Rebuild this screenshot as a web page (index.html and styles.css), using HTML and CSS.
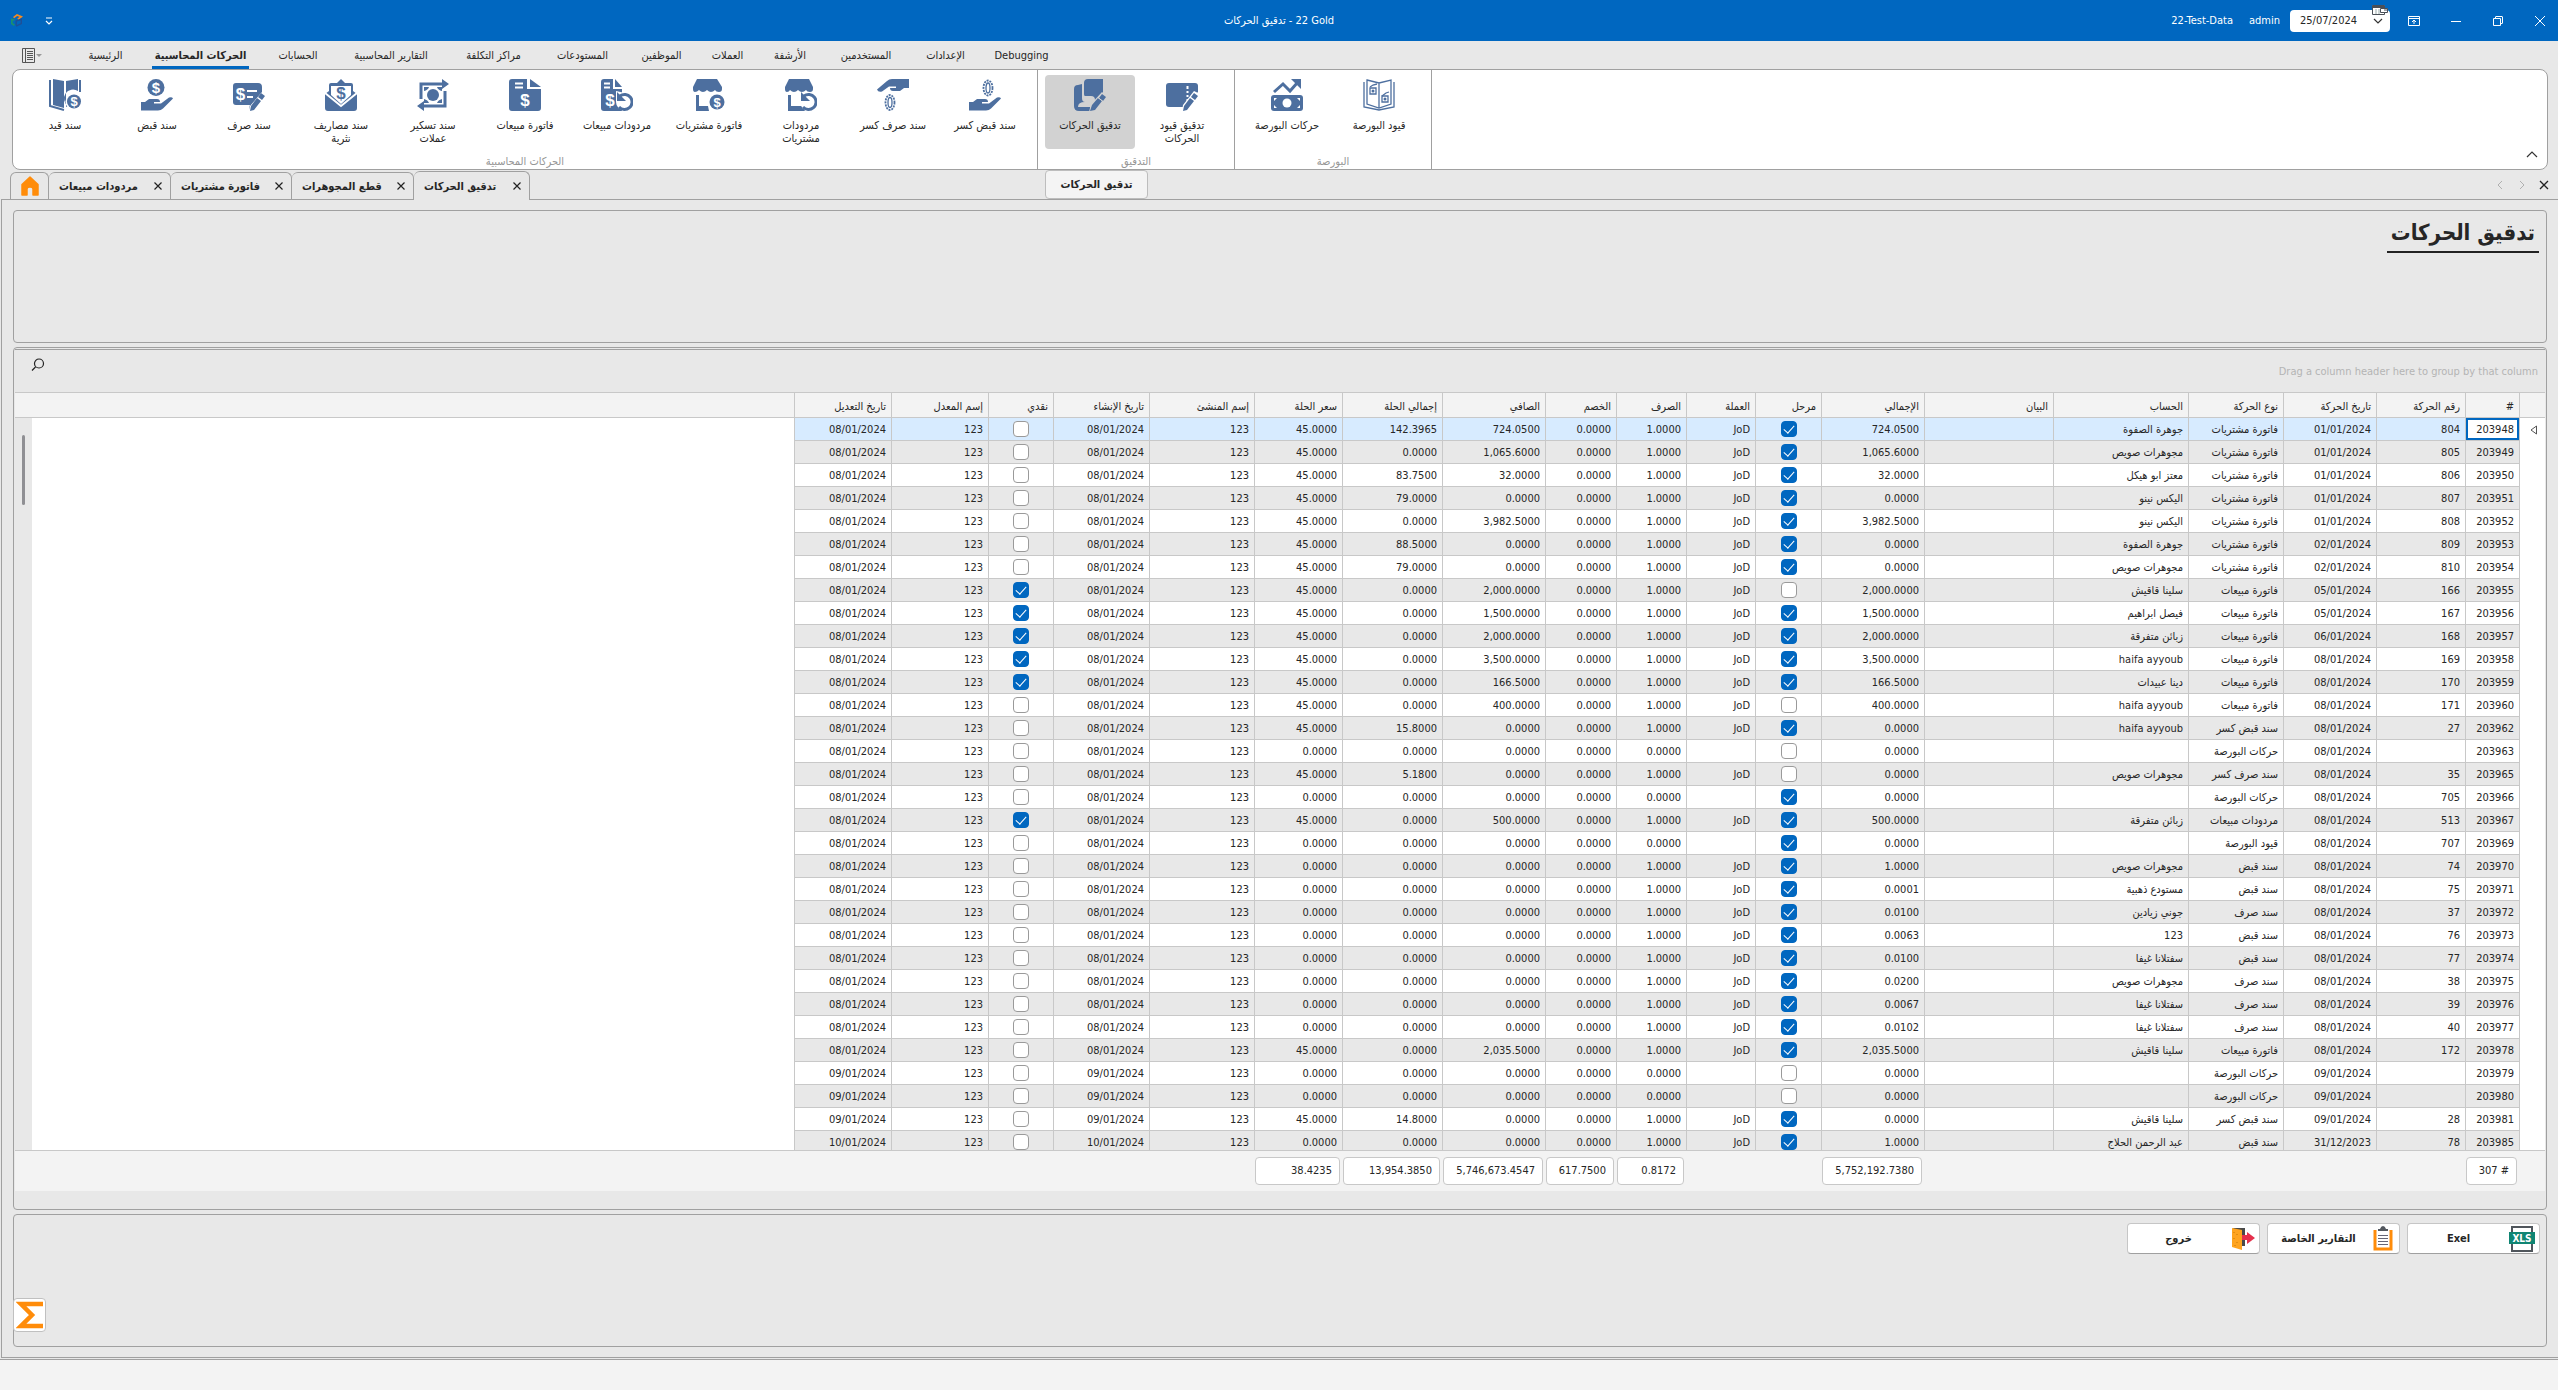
FILE: index.html
```html
<!DOCTYPE html>
<html lang="ar">
<head>
<meta charset="utf-8">
<title>تدقيق الحركات - 22 Gold</title>
<link rel="stylesheet" href="styles.css">
</head>
<body>
<header class="titlebar">
  <div class="title-left">
    <svg class="logo" viewBox="0 0 14 16"><path d="M3 4l4-3 5 2-4 3" fill="none" stroke="#f58a1f" stroke-width="2"/><path d="M1 5v6l3 2M1 6l3 1" fill="none" stroke="#1c8f6e" stroke-width="2"/><path d="M6 13V8l6-2v5l-6 3" fill="none" stroke="#1f4f96" stroke-width="1.6"/></svg>
    <button class="icon-btn" aria-label="تخصيص"><svg width="8" height="8" viewBox="0 0 8 8"><path d="M1 1h6M1 4l3 3 3-3" fill="none" stroke="#fff" stroke-width="1.2"/></svg></button>
  </div>
  <h1 class="window-title"><bdi>تدقيق الحركات</bdi> - 22 Gold</h1>
  <div class="title-right">
    <span>22-Test-Data</span>
    <span>admin</span>
    <div class="date-box">
      <input class="date-input" type="text" value="25/07/2024" aria-label="التاريخ">
      <svg width="10" height="6" viewBox="0 0 10 6"><path d="M1 1l4 4 4-4" fill="none" stroke="#333" stroke-width="1.2"/></svg>
      <svg class="date-badge" width="16" height="11" viewBox="0 0 16 11"><path d="M.5.5h12v9H.5z" fill="#fff" stroke="#4a4f57"/><path d="M1 1h11v2H1z" fill="#4a4f57"/><path d="M4 4v5M7 4v5" stroke="#9aa"/><path d="M8.500 3.500h7v4h-7z" fill="#fff" stroke="#4a4f57"/><path d="M12 5h3" stroke="#4a4f57"/></svg>
    </div>
    <div class="window-buttons">
      <button class="icon-btn" aria-label="عرض الشريط"><svg width="12" height="12" viewBox="0 0 12 12"><path d="M.5 1.500h11v9H.5zM.5 3.500h11M6 9V5M4 7l2-2 2 2" fill="none" stroke="#fff"/></svg></button>
      <button class="icon-btn" aria-label="تصغير"><svg width="12" height="12" viewBox="0 0 12 12"><path d="M1 6.500h10" stroke="#fff"/></svg></button>
      <button class="icon-btn" aria-label="استعادة"><svg width="12" height="12" viewBox="0 0 12 12"><path d="M1.500 3.500h7v7h-7zM3.500 3V2q0-.5.5-.5h6q.5 0 .5.5v6q0 .5-.5.5H9" fill="none" stroke="#fff"/></svg></button>
      <button class="icon-btn" aria-label="إغلاق"><svg width="12" height="12" viewBox="0 0 12 12"><path d="M1 1l10 10M11 1L1 11" stroke="#fff"/></svg></button>
    </div>
  </div>
</header>

<nav class="menu">
  <button class="menu-file" aria-label="قائمة"><svg width="22" height="15" viewBox="0 0 22 15"><path d="M.5.5h12v14H.5zM3.500.5v14M5 3.500h6M5 5.500h6M5 7.500h6M5 9.500h6M5 11.500h6" fill="none" stroke="#555"/><path d="M14 6h6l-3 3z" fill="#999"/></svg></button>
  <a class="menu-tab" href="#">الرئيسية</a>
  <a class="menu-tab active" href="#"><span>الحركات المحاسبية</span></a>
  <a class="menu-tab" href="#">الحسابات</a>
  <a class="menu-tab" href="#">التقارير المحاسبية</a>
  <a class="menu-tab" href="#">مراكز التكلفة</a>
  <a class="menu-tab" href="#">المستودعات</a>
  <a class="menu-tab" href="#">الموظفين</a>
  <a class="menu-tab" href="#">العملات</a>
  <a class="menu-tab" href="#">الأرشفة</a>
  <a class="menu-tab" href="#">المستخدمين</a>
  <a class="menu-tab" href="#">الإعدادات</a>
  <a class="menu-tab" href="#">Debugging</a>
</nav>

<section class="ribbon">
  <div class="group">
    <div class="tools">
      <button class="tool"><svg class="ico" viewBox="0 0 32 32"><path d="M1 1v26l14 4M31 1v12" class="ln"/><path d="M4 0l11 2v27L4 26zM17 2l12-2v12a9 9 0 0 0-10 15l-2 1z"/><circle cx="25" cy="22.500" r="8.500" class="wf"/><circle cx="25" cy="22.500" r="7"/><text x="25" y="27" class="d s13">$</text></svg><span>سند قيد</span></button>
      <button class="tool"><svg class="ico" viewBox="0 0 32 32"><circle cx="15" cy="8.500" r="8.500"/><text x="15" y="14" class="d s15">$</text><path d="M0 23h4l4-3h8q3 0 3 3h-6v1.500h7l8-6q3-1 4 1l-10 10q-2 2-5 2H0z"/></svg><span>سند قبض</span></button>
      <button class="tool"><svg class="ico" viewBox="0 0 32 32"><path d="M3 4h22q4 0 4 4v6L17 31q-1-3 0-5H3q-3 0-3-3V7q0-3 3-3z"/><text x="7.500" y="21" class="d s17">$</text><path d="M14 12h10M14 18h6" class="w"/><path d="M29 13l3 3-11 15-5 2 1-6z" class="wf"/><path d="M28 14l4 3-3 4-4-3zM24 19l4 3-7 9-4 1 1-5z"/></svg><span>سند صرف</span></button>
      <button class="tool"><svg class="ico" viewBox="0 0 32 32"><path d="M0 15l4-3V6q0-2 2-2h6l4-4 4 4h6q2 0 2 2v6l4 3v14q0 3-3 3H3q-3 0-3-3z"/><path d="M6 7h20v9l-10 9-10-9z" class="wf"/><path d="M0 14l16 13 16-13" class="w1"/><text x="16" y="20" class="b s17">$</text></svg><span>سند مصاريف نثرية</span></button>
      <button class="tool"><svg class="ico" viewBox="0 0 32 32"><path d="M4 20V5h24M28 12v15H4" class="ln3"/><path d="M25 0l7 5-7 5zM7 22l-7 5 7 5z"/><path d="M7 8h5q-1 3-5 4zM25 8h-5q1 3 5 4zM7 24h5q-1-3-5-4zM25 24h-5q1-3 5-4z"/><circle cx="16" cy="16" r="6"/></svg><span>سند تسكير عملات</span></button>
      <button class="tool"><svg class="ico" viewBox="0 0 32 32"><path d="M3 0h15v10h14v19q0 3-3 3H3q-3 0-3-3V3q0-3 3-3zM21 0l11 8H21z"/><path d="M6 4.500h8M6 8.500h8" class="w"/><text x="16" y="27" class="d s17">$</text></svg><span>فاتورة مبيعات</span></button>
      <button class="tool"><svg class="ico" viewBox="0 0 32 32"><path d="M3 0h9v10h9v22H3q-3 0-3-3V3q0-3 3-3zM14 0l7 8h-7z"/><path d="M3 4.500h6M3 8.500h6" class="w"/><text x="9" y="27" class="d s17">$</text><path d="M15 12v11a9 9 0 1 0 9-9z" class="wf"/><path d="M18 28a7.500 7.500 0 1 0 1-11" class="ln3"/><path d="M16 13v9h9z"/></svg><span>مردودات مبيعات</span></button>
      <button class="tool"><svg class="ico" viewBox="0 0 32 32"><path d="M4 0h20l5 8v2q0 3-3 3t-4-2q-2 2-4 2t-4-2q-2 2-4 2t-4-2q-2 2-4 2-2 0-2-3V8zM3 16h3v11h9l1 5H3z"/><circle cx="24" cy="23" r="9" class="wf"/><circle cx="24" cy="23" r="7.500"/><text x="24" y="28" class="d s13">$</text></svg><span>فاتورة مشتريات</span></button>
      <button class="tool"><svg class="ico" viewBox="0 0 32 32"><path d="M4 0h20l4 8v2q0 3-3 3t-4-2q-2 2-4 2t-4-2q-2 2-4 2t-4-2q-1 2-3 2-2 0-2-3V8zM3 16h3v11h11l3 5H3z"/><circle cx="24" cy="23" r="9" class="wf"/><path d="M18 28a7.500 7.500 0 1 0 1-11" class="ln3"/><path d="M16 13v9h9z"/></svg><span>مردودات مشتريات</span></button>
      <button class="tool"><svg class="ico" viewBox="0 0 32 32"><path d="M32 9h-5l-4 3h-7q-3 0-3-3h6V7.500h-7l-7 5q-4 1-5-2L10 2q2-2 5-2h17z"/><ellipse cx="13" cy="23.500" rx="4.500" ry="7.500" class="dash"/><ellipse cx="13" cy="23.500" rx="2" ry="5" class="ln1"/></svg><span>سند صرف كسر</span></button>
      <button class="tool"><svg class="ico" viewBox="0 0 32 32"><ellipse cx="19" cy="9" rx="4.500" ry="7.500" class="dash"/><ellipse cx="19" cy="9" rx="2" ry="5" class="ln1"/><path d="M0 23h4l4-3h8q3 0 3 3h-6v1.500h7l8-6q3-1 4 1l-10 10q-2 2-5 2H0z"/></svg><span>سند قبض كسر</span></button>
    </div>
    <h2 class="group-name">الحركات المحاسبية</h2>
  </div>
  <div class="group">
    <div class="tools">
      <button class="tool pressed"><svg class="ico" viewBox="0 0 32 32"><path d="M8 5v14q0 4 3 4-7 0-7 5h12l2 4H5q-5 0-5-5V10q0-4 4-4zM14 0h15v14L21 24v-3q0-4-4-4h-6q-1 0-1-2V4q0-4 4-4z"/><path d="M28 13l5 4-4 6-8 10H15l2-8z" class="gf"/><path d="M28 15l4 3-3 4-4-3zM24 19l4 3-7 9-5 1 2-6z"/><path d="M24 18.500l5 4" class="g"/></svg><span>تدقيق الحركات</span></button>
      <button class="tool"><svg class="ico" viewBox="0 0 32 32"><path d="M3 4h26q3 0 3 3v6L19 28H3q-3 0-3-3V7q0-3 3-3z"/><path d="M21.500 7v3M21.500 12v2M21.500 16v2M21.500 20v2" class="w"/><path d="M28 12l4 2v4L22 32h-6l1-6z" class="wf"/><path d="M28 14l4 3-3 4-4-3zM24 19l4 3-7 9-4 1 1-5z"/></svg><span>تدقيق قيود الحركات</span></button>
    </div>
    <h2 class="group-name">التدقيق</h2>
  </div>
  <div class="group">
    <div class="tools">
      <button class="tool"><svg class="ico" viewBox="0 0 32 32"><path d="M3 13l9-8 7 7 8-9" class="ln3"/><path d="M20 0h10v10z"/><path d="M3 16h26q3 0 3 3v10q0 3-3 3H3q-3 0-3-3V19q0-3 3-3z"/><circle cx="16" cy="24" r="4.500" class="wf"/><path d="M3 19h3L3 22zM29 19h-3l3 3zM3 29h3l-3-3zM29 29h-3l3-3z" class="wf"/></svg><span>حركات البورصة</span></button>
      <button class="tool"><svg class="ico" viewBox="0 0 32 32"><path d="M4 1l12 3 12-3v24l-12 4-12-4zM16 4v25" class="ln1"/><path d="M1 3v25l15 3 15-3V3" class="ln1"/><path d="M7 8l3-2 4-1M19 17l4-3 3-1" class="ln1"/><path d="M7 9h6v6H7zM19 17h6v6h-6z" class="ln1"/><circle cx="10" cy="12" r="1.500"/><circle cx="22" cy="20" r="1.500"/></svg><span>قيود البورصة</span></button>
    </div>
    <h2 class="group-name">البورصة</h2>
  </div>
  <button class="icon-btn collapse" aria-label="طي الشريط"><svg width="12" height="8" viewBox="0 0 12 8"><path d="M1 7l5-5 5 5" fill="none" stroke="#333" stroke-width="1.2"/></svg></button>
</section>

<div class="doc-tabs">
  <a class="doc-tab home" href="#" aria-label="الصفحة الرئيسية"><svg width="20" height="20" viewBox="0 0 20 20"><path d="M10 1l8 7.500V19h-5v-6q0-2-3-2t-3 2v6H2V8.500z" fill="#ff8c0a" stroke="#ff8c0a" stroke-width="1.500" stroke-linejoin="round"/></svg></a>
  <a class="doc-tab" href="#"><span>مردودات مبيعات</span><svg class="x" viewBox="0 0 8 8"><path d="M.5.5l7 7M7.500.5l-7 7"/></svg></a>
  <a class="doc-tab" href="#"><span>فاتورة مشتريات</span><svg class="x" viewBox="0 0 8 8"><path d="M.5.5l7 7M7.500.5l-7 7"/></svg></a>
  <a class="doc-tab" href="#"><span>قطع المجوهرات</span><svg class="x" viewBox="0 0 8 8"><path d="M.5.5l7 7M7.500.5l-7 7"/></svg></a>
  <a class="doc-tab current" href="#"><span>تدقيق الحركات</span><svg class="x" viewBox="0 0 8 8"><path d="M.5.5l7 7M7.500.5l-7 7"/></svg></a>
  <div class="tooltip" role="tooltip">تدقيق الحركات</div>
  <div class="doc-nav">
    <svg width="10" height="10" viewBox="0 0 10 10"><path d="M7 1L3 5l4 4" fill="none" stroke="#b0b0b0"/></svg>
    <svg width="10" height="10" viewBox="0 0 10 10"><path d="M3 1l4 4-4 4" fill="none" stroke="#b0b0b0"/></svg>
    <svg width="10" height="10" viewBox="0 0 10 10"><path d="M1 1l8 8M9 1L1 9" fill="none" stroke="#222" stroke-width="1.300"/></svg>
  </div>
</div>

<main class="workspace">
  <section class="panel head-panel"><h2 class="page-title">تدقيق الحركات</h2></section>

  <section class="panel grid-panel">
    <div class="group-bar">
      <button class="icon-btn" aria-label="بحث"><svg width="14" height="14" viewBox="0 0 14 14"><circle cx="8" cy="5.500" r="4.500" fill="none" stroke="#222" stroke-width="1.200"/><path d="M4.500 9L1 12.500" stroke="#222" stroke-width="1.300"/></svg></button>
      <span>Drag a column header here to group by that column</span>
    </div>
    <div class="grid-view">
      <table class="grid" dir="rtl">
        <colgroup><col class="c26"><col class="c54"><col class="c89"><col class="c93"><col class="c95"><col class="c135"><col class="c129"><col class="c103"><col class="c66"><col class="c69"><col class="c70"><col class="c71"><col class="c103"><col class="c100"><col class="c88"><col class="c105"><col class="c96"><col class="c65"><col class="c97"><col class="c97"><col><col class="c17"></colgroup>
        <thead><tr><th></th><th>#</th><th>رقم الحركة</th><th>تاريخ الحركة</th><th>نوع الحركة</th><th>الحساب</th><th>البيان</th><th>الإجمالي</th><th>مرحل</th><th>العملة</th><th>الصرف</th><th>الخصم</th><th>الصافي</th><th>إجمالي الحلة</th><th>سعر الحلة</th><th>إسم المنشئ</th><th>تاريخ الإنشاء</th><th>نقدي</th><th>إسم المعدل</th><th>تاريخ التعديل</th><th class="filler"></th><th class="filler"></th></tr></thead>
        <tbody id="rows"></tbody>
      </table>
    </div>
    <table class="grid totals" dir="rtl">
      <colgroup><col class="c26"><col class="c54"><col class="c89"><col class="c93"><col class="c95"><col class="c135"><col class="c129"><col class="c103"><col class="c66"><col class="c69"><col class="c70"><col class="c71"><col class="c103"><col class="c100"><col class="c88"><col></colgroup>
      <tbody><tr><td></td><td><output dir="ltr">307 #</output></td><td colspan="5"></td><td><output dir="ltr">5,752,192.7380</output></td><td colspan="2"></td><td><output dir="ltr">0.8172</output></td><td><output dir="ltr">617.7500</output></td><td><output dir="ltr">5,746,673.4547</output></td><td><output dir="ltr">13,954.3850</output></td><td><output dir="ltr">38.4235</output></td><td></td></tr></tbody>
    </table>
  </section>

  <section class="panel action-panel">
    <button class="action"><span>خروج</span><svg width="26" height="26" viewBox="0 0 26 26"><path d="M4 2h12v18H12z" fill="#4a4a4a"/><path d="M3 2l10 2v20L3 21z" fill="#ffa41f"/><path d="M5 6v1M8 8v1M5 12v1M8 16v1M6 19v1" stroke="#c97800"/><path d="M13 9h5V6l8 6-8 6v-4h-5z" fill="#e5304c"/></svg></button>
    <button class="action"><span>التقارير الخاصة</span><svg width="26" height="26" viewBox="0 0 26 26"><path d="M6 4v19h16V4" fill="#fff" stroke="#ff8c0a" stroke-width="3"/><path d="M9 5V3h2q1-3 3-3t3 3h2v2z" fill="#53585f"/><path d="M9 9.500h10M9 12.500h10M9 15.500h10M9 18.500h10" stroke="#667"/></svg></button>
    <button class="action"><span>Exel</span><svg width="26" height="26" viewBox="0 0 26 26"><path d="M3 1h20v24H3z" fill="#fff" stroke="#50565c" stroke-width="2"/><path d="M0 6h26v12H0z" fill="#108573"/><text x="13" y="16" class="xls">XLS</text></svg></button>
    <button class="sum-btn" aria-label="المجموع"><svg width="28" height="28" viewBox="0 0 28 28"><path d="M27 3H5l11 11L5 25h22" fill="none" stroke="#ff8c0a" stroke-width="4.500"/></svg></button>
  </section>
</main>
<footer class="statusbar"></footer>
<script src="script.js"></script>
</body>
</html>
```
FILE: script.js
```js
// id | number | date | type | account | total | posted | currency | net | gold total | gold price | cash | entry date
const records = `
203948|804|01/01/2024|فاتورة مشتريات|جوهرة الصفوة|724.0500|1|JoD|724.0500|142.3965|45.0000|0
203949|805|01/01/2024|فاتورة مشتريات|مجوهرات صويص|1,065.6000|1|JoD|1,065.6000|0.0000|45.0000|0
203950|806|01/01/2024|فاتورة مشتريات|معتز ابو هيكل|32.0000|1|JoD|32.0000|83.7500|45.0000|0
203951|807|01/01/2024|فاتورة مشتريات|اليكس نينو|0.0000|1|JoD|0.0000|79.0000|45.0000|0
203952|808|01/01/2024|فاتورة مشتريات|اليكس نينو|3,982.5000|1|JoD|3,982.5000|0.0000|45.0000|0
203953|809|02/01/2024|فاتورة مشتريات|جوهرة الصفوة|0.0000|1|JoD|0.0000|88.5000|45.0000|0
203954|810|02/01/2024|فاتورة مشتريات|مجوهرات صويص|0.0000|1|JoD|0.0000|79.0000|45.0000|0
203955|166|05/01/2024|فاتورة مبيعات|سلينا قاقيش|2,000.0000|0|JoD|2,000.0000|0.0000|45.0000|1
203956|167|05/01/2024|فاتورة مبيعات|فيصل ابراهيم|1,500.0000|1|JoD|1,500.0000|0.0000|45.0000|1
203957|168|06/01/2024|فاتورة مبيعات|زبائن متفرقة|2,000.0000|1|JoD|2,000.0000|0.0000|45.0000|1
203958|169|08/01/2024|فاتورة مبيعات|haifa ayyoub|3,500.0000|1|JoD|3,500.0000|0.0000|45.0000|1
203959|170|08/01/2024|فاتورة مبيعات|دينا عبيدات|166.5000|1|JoD|166.5000|0.0000|45.0000|1
203960|171|08/01/2024|فاتورة مبيعات|haifa ayyoub|400.0000|0|JoD|400.0000|0.0000|45.0000|0
203962|27|08/01/2024|سند قبض كسر|haifa ayyoub|0.0000|1|JoD|0.0000|15.8000|45.0000|0
203963||08/01/2024|حركات البورصة||0.0000|0||0.0000|0.0000|0.0000|0
203965|35|08/01/2024|سند صرف كسر|مجوهرات صويص|0.0000|0|JoD|0.0000|5.1800|45.0000|0
203966|705|08/01/2024|حركات البورصة||0.0000|1||0.0000|0.0000|0.0000|0
203967|513|08/01/2024|مردودات مبيعات|زبائن متفرقة|500.0000|1|JoD|500.0000|0.0000|45.0000|1
203969|707|08/01/2024|قيود البورصة||0.0000|1||0.0000|0.0000|0.0000|0
203970|74|08/01/2024|سند قبض|مجوهرات صويص|1.0000|1|JoD|0.0000|0.0000|0.0000|0
203971|75|08/01/2024|سند قبض|مستودع ذهبية|0.0001|1|JoD|0.0000|0.0000|0.0000|0
203972|37|08/01/2024|سند صرف|جوني زيادين|0.0100|1|JoD|0.0000|0.0000|0.0000|0
203973|76|08/01/2024|سند قبض|123|0.0063|1|JoD|0.0000|0.0000|0.0000|0
203974|77|08/01/2024|سند قبض|سفتلانا غيفا|0.0100|1|JoD|0.0000|0.0000|0.0000|0
203975|38|08/01/2024|سند صرف|مجوهرات صويص|0.0200|1|JoD|0.0000|0.0000|0.0000|0
203976|39|08/01/2024|سند صرف|سفتلانا غيفا|0.0067|1|JoD|0.0000|0.0000|0.0000|0
203977|40|08/01/2024|سند صرف|سفتلانا غيفا|0.0102|1|JoD|0.0000|0.0000|0.0000|0
203978|172|08/01/2024|فاتورة مبيعات|سلينا قاقيش|2,035.5000|1|JoD|2,035.5000|0.0000|45.0000|0
203979||09/01/2024|حركات البورصة||0.0000|0||0.0000|0.0000|0.0000|0|09/01/2024
203980||09/01/2024|حركات البورصة||0.0000|0||0.0000|0.0000|0.0000|0|09/01/2024
203981|28|09/01/2024|سند قبض كسر|سلينا قاقيش|0.0000|1|JoD|0.0000|14.8000|45.0000|0|09/01/2024
203985|78|31/12/2023|سند قبض|عبد الرحمن الحلاج|1.0000|1|JoD|0.0000|0.0000|0.0000|0|10/01/2024
`.trim().split('\n').map(line => line.split('|'));

const cell = text => `<td>${text}</td>`;
const tick = (on, label) =>
  `<td class="tick"><input type="checkbox" aria-label="${label}"${on === '1' ? ' checked' : ''}></td>`;

document.getElementById('rows').innerHTML = records.map((r, i) => {
  const [id, no, date, type, account, total, posted, cur, net, gold, price, cash, entry = '08/01/2024'] = r;
  const marker = i === 0
    ? '<svg width="7" height="10" viewBox="0 0 7 10"><path d="M6.500 1v8L1 5z" fill="none" stroke="#555"/></svg>' : '';
  const side = i === 0
    ? `<td class="filler" rowspan="${records.length}"></td><td class="filler track" rowspan="${records.length}"><div class="thumb"></div></td>` : '';
  return `<tr${i === 0 ? ' class="selected"' : ''}><td class="marker">${marker}</td>` +
    `<td${i === 0 ? ' class="focused"' : ''}>${id}</td>` +
    cell(no) + cell(date) + cell(type) + cell(account) + cell('') + cell(total) +
    tick(posted, 'مرحل') + cell(cur) + cell(cur ? '1.0000' : '0.0000') + cell('0.0000') +
    cell(net) + cell(gold) + cell(price) + cell('123') + cell(entry) +
    tick(cash, 'نقدي') + cell('123') + cell(entry) + side + '</tr>';
}).join('');
```
FILE: styles.css
```css
:root {
  --blue: #0067c0;
  --face: #e8e8e8;
  --light: #f3f3f3;
  --edge: #a0a0a0;
  --line: #c8c8c8;
  --icon: #4d6f9f;
  --text: #262626;
}
* { box-sizing: border-box; }
body {
  margin: 0;
  height: 100vh;
  display: flex;
  flex-direction: column;
  overflow: hidden;
  background: var(--face);
  color: var(--text);
  font: 11px/13px "DejaVu Sans Condensed", "DejaVu Sans", sans-serif;
}
button, input { font: inherit; color: inherit; }
button { border: 0; padding: 0; background: none; }
a { color: inherit; text-decoration: none; }
h1, h2 { margin: 0; font: inherit; }
svg { display: block; }
.icon-btn { display: grid; place-items: center; }

/* title bar */
.titlebar {
  flex: none;
  height: 41px;
  display: grid;
  grid-template-columns: 1fr auto 1fr;
  align-items: center;
  background: var(--blue);
  color: #fff;
}
.title-left { display: flex; align-items: center; gap: 22px; padding-left: 11px; }
.logo { width: 12px; height: 16px; }
.title-right { display: flex; align-items: center; justify-content: flex-end; }
.title-right > span { margin-right: 16px; }
.title-right > span + span { margin-right: 10px; }
.date-box {
  position: relative;
  display: flex;
  align-items: center;
  width: 100px;
  height: 22px;
  padding-right: 7px;
  background: #fff;
  color: var(--text);
  border-radius: 4px;
}
.date-input { flex: 1; width: 0; height: 20px; border: 0; padding: 0 0 0 10px; background: none; }
.date-badge { position: absolute; top: -5px; right: 2px; }
.window-buttons { display: flex; gap: 30px; padding: 0 12px 0 18px; }

/* ribbon tabs */
.menu {
  flex: none;
  height: 28px;
  display: grid;
  grid-template-columns: 72px 67px 123px 72px 114px 91px 87px 71px 61px 64px 88px 71px 81px;
}
.menu-file { display: flex; align-items: center; padding-left: 22px; }
.menu-tab { display: flex; justify-content: center; align-items: center; white-space: nowrap; }
.menu-tab.active { font-weight: bold; }
.menu-tab.active span { border-bottom: 3px solid var(--blue); padding: 8px 3px 4px; }

/* ribbon */
.ribbon {
  flex: none;
  position: relative;
  height: 101px;
  margin: 0 10px 0 12px;
  display: flex;
  background: #fff;
  border: 1px solid var(--edge);
  border-radius: 8px;
}
.group {
  display: flex;
  flex-direction: column;
  justify-content: space-between;
  padding: 5px 7px 0;
  border-right: 1px solid var(--edge);
}
.tools { display: flex; gap: 2px; }
.tool {
  width: 90px;
  height: 74px;
  padding: 4px 8px 0;
  display: flex;
  flex-direction: column;
  align-items: center;
  gap: 8px;
  border-radius: 4px;
  line-height: 13px;
}
.tool span { width: 74px; text-align: center; }
.pressed { background: #d2d2d2; }
.group-name { text-align: center; color: #969696; line-height: 15px; }
.collapse { position: absolute; right: 9px; bottom: 11px; }

.ico { flex: none; width: 32px; height: 32px; fill: var(--icon); }
.ico .ln, .ico .ln1, .ico .ln3, .ico .dash { fill: none; stroke: var(--icon); stroke-width: 2; }
.ico .ln1 { stroke-width: 1.3; }
.ico .ln3 { stroke-width: 3; }
.ico .dash { stroke-dasharray: 2 1; stroke-width: 1.8; }
.ico .w, .ico .w1 { fill: none; stroke: #fff; stroke-width: 2; }
.ico .g { stroke: #d2d2d2; stroke-width: 1; }
.ico .wf { fill: #fff; }
.ico .gf { fill: #d2d2d2; }
.ico text { font-family: "Liberation Sans", sans-serif; font-weight: bold; text-anchor: middle; }
.ico .d { fill: #fff; }
.ico .s13 { font-size: 13px; }
.ico .s15 { font-size: 15px; }
.ico .s17 { font-size: 17px; }

/* document tabs */
.doc-tabs {
  flex: none;
  position: relative;
  height: 29px;
  padding: 0 9px 0 10px;
  display: grid;
  grid-template-columns: 39px 122px 121px 122px 116px 1fr;
  align-items: end;
}
.doc-tab {
  display: flex;
  align-items: center;
  justify-content: space-between;
  height: 27px;
  padding: 0 8px 0 10px;
  border: 1px solid var(--edge);
  border-left-width: 0;
  border-bottom-width: 0;
  border-radius: 6px 6px 0 0;
  font-weight: bold;
  white-space: nowrap;
}
.doc-tab.home { border-left-width: 1px; justify-content: center; padding: 0; }
.doc-tab.current { height: 29px; z-index: 1; background: var(--face); margin-bottom: -1px; }
.x { width: 8px; height: 8px; fill: none; stroke: #222; stroke-width: 1.2; }
.doc-nav { display: flex; justify-content: flex-end; align-self: center; gap: 12px; }
.tooltip {
  position: absolute;
  left: 1045px;
  top: 0;
  width: 103px;
  height: 29px;
  line-height: 27px;
  text-align: center;
  font-weight: bold;
  background: #f4f4f4;
  border: 1px solid #bdbdbd;
  border-radius: 4px;
}

/* work area */
.workspace {
  flex: 1;
  min-height: 0;
  margin-left: 1px;
  padding: 10px 11px 10px 11px;
  display: flex;
  flex-direction: column;
  gap: 4px;
  border: 1px solid var(--edge);
  border-right: 0;
}
.panel { border: 1px solid var(--edge); border-radius: 4px; }
.head-panel { flex: none; height: 133px; padding: 8px 7px; text-align: right; }
.page-title {
  display: inline-block;
  padding: 2px 4px 6px;
  font-size: 22px;
  line-height: 24px;
  font-weight: bold;
  border-bottom: 2px solid #222;
}
.grid-panel { flex: 1; min-height: 0; display: flex; flex-direction: column; padding: 1px 1px 18px; }
.group-bar {
  flex: none;
  height: 43px;
  padding: 0 7px 0 16px;
  display: flex;
  justify-content: space-between;
  align-items: center;
  border-top: 1px solid var(--edge);
  color: #b4b4b4;
}
.group-bar .icon-btn { padding-bottom: 12px; }

.grid-view { flex: 1; min-height: 0; overflow: hidden; background: #fff; }
.grid { width: 100%; table-layout: fixed; border-collapse: separate; border-spacing: 0; }
.grid th, .grid td { padding: 0 5px; text-align: right; white-space: nowrap; overflow: hidden; }
.grid th {
  height: 26px;
  padding-top: 2px;
  font-weight: normal;
  background: var(--light);
  border: solid var(--line);
  border-width: 1px 0 1px 1px;
}
.grid tbody td { height: 23px; border: solid var(--line); border-width: 0 0 1px 1px; }
.grid tbody tr:nth-child(even) td { background: var(--face); }
.grid tbody .selected td { background: #d7ebff; }
.grid tbody .selected .focused {
  background: #fff;
  box-shadow: inset 0 0 0 2px var(--blue);
}
.grid tbody tr td.marker { background: #fff; border-bottom: 0; padding: 0 8px; }
.grid th.filler { border-left: 0; }
.grid tbody .selected td.filler { background: #fff; border: 0; }
.grid tbody .selected td.track { background: var(--face); padding: 17px 0 0 7px; vertical-align: top; }
.thumb { width: 3px; height: 70px; background: #8f8f93; border-radius: 2px; margin-right: auto; }
.grid td.tick { padding: 0; text-align: center; }
.tick input {
  appearance: none;
  display: block;
  width: 16px;
  height: 16px;
  margin: 0 auto;
  border: 1px solid #9a9a9a;
  border-radius: 4px;
  background: #fff;
}
.tick input:checked { border-color: var(--blue); background: var(--blue); display: grid; place-items: center; }
.tick input:checked::after {
  content: "";
  width: 9px;
  height: 5px;
  margin-bottom: 3px;
  border: solid #fff;
  border-width: 0 0 1px 1px;
  rotate: -48deg;
}
.totals { flex: none; background: var(--light); border-top: 1px solid var(--line); }
.totals tbody td { height: 40px; padding: 0 2px 0 1px; border: 0; }
.totals output {
  display: block;
  height: 28px;
  line-height: 26px;
  padding-right: 7px;
  background: #fff;
  border: 1px solid var(--line);
  border-radius: 4px;
}
.c17 { width: 17px; } .c26 { width: 26px; } .c54 { width: 54px; } .c65 { width: 65px; }
.c66 { width: 66px; } .c69 { width: 69px; } .c70 { width: 70px; } .c71 { width: 71px; }
.c88 { width: 88px; } .c89 { width: 89px; } .c93 { width: 93px; } .c95 { width: 95px; }
.c96 { width: 96px; } .c97 { width: 97px; } .c100 { width: 100px; } .c103 { width: 103px; }
.c105 { width: 105px; } .c129 { width: 129px; } .c135 { width: 135px; }

/* actions */
.action-panel {
  flex: none;
  position: relative;
  height: 133px;
  padding: 8px 6px;
  display: flex;
  justify-content: flex-end;
  align-items: flex-start;
  gap: 7px;
}
.action {
  width: 133px;
  height: 31px;
  padding: 0 4px;
  display: flex;
  align-items: center;
  background: #fff;
  border: 1px solid #c6c6c6;
  border-bottom-color: var(--edge);
  border-radius: 4px;
  font-weight: bold;
}
.action span { flex: 1; margin-right: 4px; text-align: center; white-space: nowrap; }
.xls { fill: #fff; font: bold 10px "DejaVu Sans Condensed", sans-serif; text-anchor: middle; }
.sum-btn {
  position: absolute;
  left: -1px;
  bottom: 14px;
  width: 33px;
  height: 34px;
  display: grid;
  place-items: center;
  background: #fff;
  border: 1px solid #c0c0c0;
  border-radius: 4px;
}
.statusbar { flex: none; height: 31px; margin-top: 1px; background: var(--light); border-top: 1px solid var(--edge); }
```
